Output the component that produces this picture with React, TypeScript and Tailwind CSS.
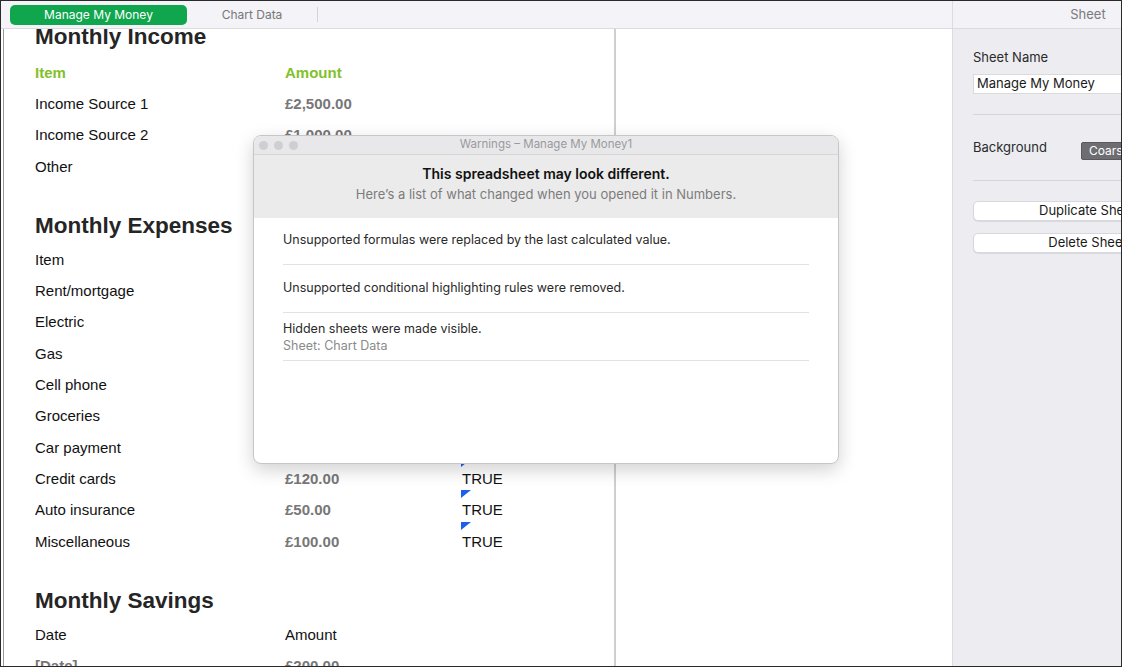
const font = { fontFamily: '"Liberation Sans", Arial, sans-serif' };
const ui = { fontFamily: 'Inter, "Liberation Sans", sans-serif' };

type Row = { item: string; amount?: string; flag?: boolean };

const income: Row[] = [
  { item: "Income Source 1", amount: "£2,500.00" },
  { item: "Income Source 2", amount: "£1,000.00" },
  { item: "Other" },
];

const expenses: Row[] = [
  { item: "Rent/mortgage" },
  { item: "Electric" },
  { item: "Gas" },
  { item: "Cell phone" },
  { item: "Groceries" },
  { item: "Car payment" },
  { item: "Credit cards", amount: "£120.00", flag: true },
  { item: "Auto insurance", amount: "£50.00", flag: true },
  { item: "Miscellaneous", amount: "£100.00", flag: true },
];

function Heading({ children, first }: { children: string; first?: boolean }) {
  return (
    <div
      className={`h-[36.7px] flex items-center pl-[31px] text-[22.5px] font-bold leading-none text-[#252525] ${first ? "-mt-[10.35px] mb-[2px]" : "mt-[25px]"}`}
    >
      {children}
    </div>
  );
}

function DataRow({ row }: { row: Row }) {
  return (
    <div className="h-[31.33px] flex items-center text-[15px] text-[#111]">
      <div className="w-[281px] pl-[31px] shrink-0">{row.item}</div>
      <div className="w-[177px] shrink-0 font-bold text-[#777]">{row.amount}</div>
      {row.flag && (
        <div className="relative">
          <span className="absolute -top-[9px] -left-[1px] w-0 h-0 border-t-[8px] border-t-[#1f5fe8] border-r-[10px] border-r-transparent" />
          <span className="text-[#111]">TRUE</span>
        </div>
      )}
    </div>
  );
}

function HeadRow({ a, b, green }: { a: string; b: string; green?: boolean }) {
  return (
    <div
      className={`h-[31.33px] flex items-center text-[15px] ${green ? "font-bold text-[#82c12a]" : "text-[#111]"}`}
    >
      <div className="w-[281px] pl-[31px] shrink-0">{a}</div>
      <div>{b}</div>
    </div>
  );
}

function Dialog() {
  return (
    <div
      style={ui}
      className="absolute left-[252px] top-[134px] w-[586px] h-[329px] rounded-[8px] bg-white border border-[#c6c6c8] shadow-[0_6px_18px_rgba(0,0,0,0.18)] overflow-hidden flex flex-col"
    >
      <div className="h-[19px] bg-[#e8e8ea] border-b border-[#d6d6d8] flex items-center relative shrink-0">
        <div className="flex gap-[6px] pl-[5px]">
          <span className="w-[9px] h-[9px] rounded-full bg-[#cfcfd1]" />
          <span className="w-[9px] h-[9px] rounded-full bg-[#cfcfd1]" />
          <span className="w-[9px] h-[9px] rounded-full bg-[#cfcfd1]" />
        </div>
        <div className="absolute inset-0 flex items-center justify-center text-[11.5px] text-[#9a9a9c]">
          Warnings – Manage My Money1
        </div>
      </div>
      <div className="h-[63px] bg-[#ebebeb] flex flex-col items-center pt-[10px] shrink-0">
        <div className="text-[14px] font-semibold text-[#111] leading-[18px]">This spreadsheet may look different.</div>
        <div className="text-[13px] text-[#7c7c7c] leading-[18px] mt-[2px]">
          Here’s a list of what changed when you opened it in Numbers.
        </div>
      </div>
      <div className="px-[29px] text-[12.5px] text-[#2a2a2a]">
        <div className="h-[47px] flex items-center border-b border-[#e2e2e2] pb-[1px]">
          Unsupported formulas were replaced by the last calculated value.
        </div>
        <div className="h-[48px] flex items-center border-b border-[#e2e2e2]">
          Unsupported conditional highlighting rules were removed.
        </div>
        <div className="h-[48px] flex flex-col justify-center border-b border-[#e2e2e2]">
          <div className="leading-[17px]">Hidden sheets were made visible.</div>
          <div className="leading-[17px] text-[#8a8a8a]">Sheet: Chart Data</div>
        </div>
      </div>
    </div>
  );
}

function Sidebar() {
  return (
    <div style={ui} className="w-[169px] shrink-0 bg-[#ececf1] border-l border-[#dcdce0] overflow-hidden">
      <div className="w-[270px]">
        <div className="h-[28px] border-b border-[#dcdce0] flex items-center justify-center text-[13px] text-[#7a7a7e] bg-[#f2f2f7]">
          Sheet
        </div>
        <div className="pl-[20px] pr-[21px]">
          <div className="mt-[20px] text-[13px] text-[#2a2a2a] leading-[16px]">Sheet Name</div>
          <div className="mt-[9px] h-[20px] bg-white border border-[#dadada] flex items-center pl-[3px] text-[13px] text-[#1a1a1a]">
            Manage My Money
          </div>
          <div className="mt-[20px] border-t border-[#d6d6da]" />
          <div className="h-[65px] flex items-center">
            <div className="w-[108px] text-[13px] text-[#2a2a2a]">Background</div>
            <div className="h-[18px] px-[7px] bg-[#6e6e72] border border-[#5a5a5e] text-white text-[12px] flex items-center rounded-[2px] mt-[6px]">
              Coarse
            </div>
          </div>
          <div className="border-t border-[#d6d6da]" />
          <div className="mt-[20px] h-[20px] bg-white rounded-[5px] border border-[#d8d8dc] shadow-[0_1px_1px_rgba(0,0,0,0.08)] flex items-center justify-center text-[13px] text-[#1a1a1a]">
            Duplicate Sheet
          </div>
          <div className="mt-[12px] h-[20px] bg-white rounded-[5px] border border-[#d8d8dc] shadow-[0_1px_1px_rgba(0,0,0,0.08)] flex items-center justify-center text-[13px] text-[#1a1a1a]">
            Delete Sheet
          </div>
        </div>
      </div>
    </div>
  );
}

export default function App() {
  return (
    <div className="w-[1122px] h-[667px] border border-[#2a2a2a] flex bg-white overflow-hidden relative">
      <div className="flex-1 flex flex-col min-w-0">
        <div style={ui} className="h-[28px] bg-[#f3f3f8] border-b border-[#dcdce0] flex items-center pl-[9px] shrink-0">
          <div className="w-[177px] h-[20px] rounded-[5px] bg-[#0fa64e] text-white text-[12px] flex items-center justify-center">
            Manage My Money
          </div>
          <div className="w-[130px] text-center text-[12px] text-[#777]">Chart Data</div>
          <div className="w-px h-[15px] bg-[#d4d4d8]" />
        </div>
        <div className="flex-1 flex overflow-hidden">
          <div className="w-[2px] bg-white" />
          <div className="w-px bg-[#9a9a9a]" />
          <div className="w-[610px] shrink-0 overflow-hidden" style={font}>
            <Heading first>Monthly Income</Heading>
            <HeadRow a="Item" b="Amount" green />
            {income.map((r) => (
              <DataRow key={r.item} row={r} />
            ))}
            <Heading>Monthly Expenses</Heading>
            <HeadRow a="Item" b="" />
            {expenses.map((r) => (
              <DataRow key={r.item} row={r} />
            ))}
            <Heading>Monthly Savings</Heading>
            <HeadRow a="Date" b="Amount" />
            <div className="h-[31.33px] flex items-center text-[15px] font-bold text-[#777]">
              <div className="w-[281px] pl-[31px] shrink-0">[Date]</div>
              <div>£200.00</div>
            </div>
          </div>
          <div className="w-[2px] bg-[#cfcfcf]" />
          <div className="flex-1" />
        </div>
      </div>
      <Sidebar />
      <Dialog />
    </div>
  );
}
